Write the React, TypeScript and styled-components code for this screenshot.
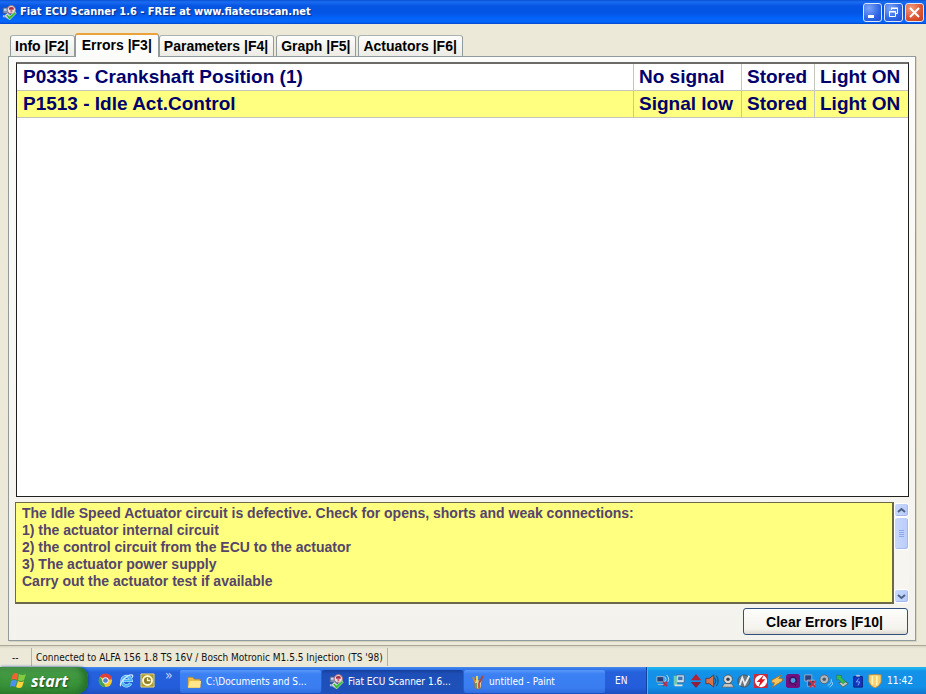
import React, { useState } from "react";
import styled, { createGlobalStyle, css } from "styled-components";

const GlobalStyle = createGlobalStyle`
  * { box-sizing: border-box; }
  html, body { margin: 0; height: 100%; }
  body { font-family: "Liberation Sans", Arial, sans-serif; overflow: hidden; }
  button, textarea { font: inherit; margin: 0; }
  svg { display: block; flex: none; }
`;

const uiFont = css`
  font-family: "DejaVu Sans Condensed", "DejaVu Sans", Tahoma, sans-serif;
`;

const Desktop = styled.div`
  display: flex;
  flex-direction: column;
  height: 100vh;
  background: #ece9d8;
`;

const TitleBar = styled.header`
  display: flex;
  align-items: center;
  gap: 3px;
  flex: none;
  height: 24px;
  padding: 0 2px;
  background: linear-gradient(#0b52d4 0, #1a6cf2 2px, #0655e2 6px, #0355e6 13px, #0465fb 19px, #0465fb 22px, #0148c8 24px);
`;

const Title = styled.h1`
  flex: 1;
  margin: 0;
  font: bold 11px/16px "DejaVu Sans Condensed", "DejaVu Sans", sans-serif;
  color: #fff;
  text-shadow: 1px 1px 1px #0c2f86;
  white-space: nowrap;
`;

const WindowButton = styled.button<{ $close?: boolean }>`
  display: flex;
  align-items: center;
  justify-content: center;
  width: 19px;
  height: 19px;
  padding: 0;
  border: 1px solid #dbe6fb;
  border-radius: 3px;
  background: ${(p) =>
    p.$close
      ? "radial-gradient(circle at 30% 25%, #f09a7c, #dd5230 60%, #c13f1c)"
      : "radial-gradient(circle at 30% 25%, #7ba4f8, #2f66e6 60%, #1d50cc)"};
`;

const WindowButtons = styled.div`
  display: flex;
  gap: 2px;
`;

const Main = styled.main`
  display: flex;
  flex-direction: column;
  flex: 1;
  min-height: 0;
  padding: 9px 10px 4px 8px;
`;

const TabList = styled.div`
  display: flex;
  align-items: flex-end;
  flex: none;
  height: 24px;
  margin-bottom: -1px;
  padding-left: 2px;
`;

const Tab = styled.button<{ $active: boolean }>`
  position: relative;
  height: ${(p) => (p.$active ? 24 : 22)}px;
  margin-right: ${(p) => (p.$active ? 0 : 2)}px;
  padding: 0 5px 0 4px;
  border: 1px solid #919b9c;
  border-top: ${(p) => (p.$active ? "2px solid #eba23b" : "1px solid #a9b3b4")};
  border-bottom: ${(p) => (p.$active ? "0" : "1px solid #919b9c")};
  border-radius: 3px 3px 0 0;
  background: ${(p) => (p.$active ? "#fcfcfb" : "linear-gradient(#fdfdfc, #ecebe5)")};
  font: bold 14px/20px "Liberation Sans", Arial, sans-serif;
  color: #000;
  white-space: nowrap;
  ${(p) => p.$active && "margin-left: -2px; padding: 0 6px 4px 6px; z-index: 1;"}
`;

const Panel = styled.section`
  display: flex;
  flex-direction: column;
  flex: 1;
  min-height: 0;
  padding: 5px 6px 5px 7px;
  border: 1px solid #919b9c;
  background: linear-gradient(#fcfcfb, #f3f2ec);
  box-shadow: 1px 1px 0 #d6d3c3;
`;

const ErrorList = styled.div`
  flex: 1;
  min-height: 0;
  overflow: hidden;
  border: 1px solid #202020;
  border-top: 2px solid #6d6b67;
  background: #fff;
`;

const ErrorTable = styled.table`
  width: 100%;
  border-collapse: separate;
  border-spacing: 0;
  font: bold 19px/26px "Liberation Sans", Arial, sans-serif;
  color: #00006c;
`;

const ErrorRow = styled.tr<{ $selected: boolean }>`
  background: ${(p) => (p.$selected ? "#ffff80" : "#fff")};
`;

const Cell = styled.td<{ $width?: number }>`
  width: ${(p) => (p.$width ? `${p.$width}px` : "auto")};
  height: 27px;
  padding: 0 0 0 6px;
  border-bottom: 1px solid #c6c5bb;
  white-space: nowrap;
  & + & { border-left: 1px solid #c6c5bb; padding-left: 5px; }
`;

const Details = styled.div`
  display: flex;
  flex: none;
  height: 102px;
  margin: 5px 0 4px -1px;
`;

const DetailsText = styled.textarea`
  flex: 1;
  min-width: 0;
  padding: 2px 6px 0;
  border: 1px solid #6b6948;
  border-right-width: 2px;
  border-bottom-width: 2px;
  border-radius: 0;
  outline: 0;
  resize: none;
  overflow: hidden;
  background: #ffff80;
  color: #55456a;
  font: bold 14px/17px "Liberation Sans", Arial, sans-serif;
`;

const ScrollBar = styled.div`
  display: flex;
  flex-direction: column;
  width: 15px;
  padding: 1px 0;
  background: #f6f5f0;
`;

const ScrollPart = styled.button<{ $height: number; $last?: boolean }>`
  display: flex;
  align-items: center;
  justify-content: center;
  width: 15px;
  height: ${(p) => p.$height}px;
  margin-top: ${(p) => (p.$last ? "auto" : "0")};
  padding: 0;
  border: 1px solid #fff;
  border-radius: 3px;
  background: linear-gradient(90deg, #c9d8fc, #b9ccfa);
  box-shadow: inset -1px -1px 0 #a3b9ef;
`;

const Actions = styled.div`
  display: flex;
  justify-content: flex-end;
  padding-right: 1px;
`;

const ClearButton = styled.button`
  width: 165px;
  height: 27px;
  padding: 0 2px 0 0;
  border: 1px solid #2f4f7c;
  border-radius: 3px;
  background: linear-gradient(#fdfdfb, #f3f2ed 80%, #dcd8ce);
  font: bold 14px/20px "Liberation Sans", Arial, sans-serif;
  color: #000;
`;

const StatusBar = styled.footer`
  display: flex;
  flex: none;
  height: 22px;
  padding-top: 2px;
  border-top: 1px solid #aaa799;
  background: linear-gradient(#d9d6c6, #ece9d8 3px);
  ${uiFont}
  font-size: 10px;
  line-height: 19px;
  color: #111;
`;

const StatusItem = styled.div<{ $narrow?: boolean }>`
  width: ${(p) => (p.$narrow ? "32px" : "auto")};
  padding: ${(p) => (p.$narrow ? "0 0 0 12px" : "0 4px")};
  height: 18px;
  border-right: 1px solid #b5b2a2;
  white-space: nowrap;
`;

const TaskBar = styled.nav`
  display: flex;
  flex: none;
  height: 27px;
  background: linear-gradient(#4b8bea 0, #3178ea 2px, #2661dc 5px, #245ddb 20px, #1e4fbd 27px);
  ${uiFont}
  font-size: 10px;
  color: #fff;
`;

const StartButton = styled.button`
  display: flex;
  align-items: center;
  gap: 4px;
  width: 88px;
  padding: 0 0 0 9px;
  border: 0;
  border-radius: 0 10px 12px 0;
  background: linear-gradient(#62a462 0, #469b46 3px, #3a943a 16px, #2f8330 27px);
  box-shadow: inset -5px 0 6px #267128, 1px 0 3px #17469f;
  font: italic bold 16px/24px "Open Sans", sans-serif;
  color: #fff;
  text-shadow: 1px 1px 2px #1b4a1c;
`;

const QuickLaunch = styled.div`
  display: flex;
  align-items: center;
  gap: 6px;
  width: 92px;
  padding-left: 10px;
`;

const IconButton = styled.button`
  padding: 0;
  border: 0;
  background: none;
`;

const Chevron = styled.span`
  align-self: flex-start;
  margin-left: 4px;
  font-size: 14px;
  line-height: 16px;
  color: #c5d8fa;
`;

const TaskButton = styled.button<{ $active?: boolean }>`
  display: flex;
  align-items: center;
  gap: 4px;
  width: 141px;
  height: 23px;
  margin: 3px 1px 0 0;
  padding: 0 7px;
  border: 0;
  border-radius: 2px;
  background: ${(p) =>
    p.$active
      ? "linear-gradient(#173f9c, #1e4fb8 4px, #1f51bb)"
      : "linear-gradient(#5b97f8, #3c81f3 4px, #397df0 18px, #2f6de0)"};
  color: #fff;
  white-space: nowrap;
`;

const Language = styled.div`
  flex: 1;
  padding-left: 9px;
  line-height: 28px;
`;

const Tray = styled.div`
  display: flex;
  align-items: center;
  justify-content: space-between;
  width: 280px;
  padding: 0 13px 0 9px;
  border-left: 1px solid #10429f;
  background: linear-gradient(#2aa6ee 0, #19b9f0 1px, #1492e8 4px, #1290e8 20px, #0e74cb 27px);
  box-shadow: inset 1px 0 0 #35bdf5;
`;

const Clock = styled.time`
  margin-left: 3px;
`;

function ScannerIcon({ size = 16 }: { size?: number }) {
  return (
    <svg width={size} height={size} viewBox="0 0 16 16">
      <path d="M1 3h6v6H1z" fill="#7d91b8" stroke="#3b5489" />
      <path d="M2 4h3v2H2zM1 11h4v2H1z" fill="#c8d9f5" />
      <circle cx="10" cy="5" r="4.4" fill="#e9dfe2" stroke="#a56a72" />
      <path d="M7.5 3q2.500-2 5 0v2h-5z" fill="#a53040" />
      <path d="M9 5h2v3H9z" fill="#d0667a" />
      <path d="M2 12l4-4 3 3-3 4z" fill="#c9c5ed" stroke="#6570ac" strokeWidth=".6" />
      <path d="M4 11l2-1 2 2 6-5 1 2-7 7z" fill="#35bc35" stroke="#dff5d0" strokeWidth=".7" />
    </svg>
  );
}

function WindowsLogo() {
  return (
    <svg width="18" height="17" viewBox="0 0 18 17">
      <path d="M4 2q3-2 5 0L8 8Q5 6 2 8z" fill="#f26332" />
      <path d="M10 2q3 2 7 0l-2 6q-3 2-6 0z" fill="#86c940" />
      <path d="M2 9q3-2 6 0l-2 6q-3-2-5 0z" fill="#4b91f2" />
      <path d="M9 9q3 2 6 0l-2 6q-3 2-6 0z" fill="#fdd33d" />
    </svg>
  );
}

function ChromeIcon() {
  return (
    <svg width="15" height="15" viewBox="0 0 16 16">
      <circle cx="8" cy="8" r="7" fill="#f2c831" />
      <path d="M2 4a7 7 0 0 1 13 3H8z" fill="#dd4236" />
      <path d="M2 4l4 6 2 5A7 7 0 0 1 2 4" fill="#43a353" />
      <circle cx="8" cy="8" r="3.4" fill="#e9f2ff" />
      <circle cx="8" cy="8" r="2.5" fill="#4b83d5" />
    </svg>
  );
}

function ExplorerIcon() {
  return (
    <svg width="15" height="15" viewBox="0 0 16 16" fill="none">
      <path d="M12.500 11A5 5 0 1 1 13 8H5" stroke="#c7ecff" strokeWidth="3.4" />
      <path d="M12.500 11A5 5 0 1 1 13 8H5" stroke="#48b4f4" strokeWidth="2.2" />
      <path d="M2 14C-1 12 8 2 13 2c2 0 2 1 1 3" stroke="#cceaff" strokeWidth="1.4" />
    </svg>
  );
}

function OutlookIcon() {
  return (
    <svg width="15" height="15" viewBox="0 0 16 16">
      <path d="M1 1h14v14H1z" fill="#ad9a31" stroke="#e9d878" />
      <circle cx="8" cy="8" r="4.8" fill="#8d7c25" stroke="#fff9cf" strokeWidth="2" />
      <path d="M8 5v3h3" fill="none" stroke="#fff9cf" strokeWidth="1.4" />
    </svg>
  );
}

function FolderIcon() {
  return (
    <svg width="15" height="14" viewBox="0 0 16 14">
      <path d="M1 2h5l2 2h6v9H1z" fill="#eebc45" stroke="#ae7d22" strokeWidth=".6" />
      <path d="M3 6h12l-1 7H1z" fill="#ffe58b" />
    </svg>
  );
}

function PaintIcon() {
  return (
    <svg width="14" height="16" viewBox="0 0 14 16">
      <path d="M3 6h8l-1 8q-3 2-6 0z" fill="#e0cfae" stroke="#765b42" strokeWidth=".7" />
      <path d="M4 8L2 3" stroke="#c88545" strokeWidth="2" />
      <path d="M6 8V2" stroke="#e7d65a" strokeWidth="2" />
      <path d="M8 9l4-7" stroke="#a84940" strokeWidth="2" />
      <path d="M5 9v5" stroke="#63a05c" strokeWidth="2" />
      <path d="M8 9v5" stroke="#cf5744" strokeWidth="2" />
    </svg>
  );
}

const trayDrawings: { name: string; art: React.ReactNode }[] = [
  { name: "Wireless disconnected", art: <><path d="M1 3h8v6H1zM2 12h7" fill="#293d79" stroke="#b3bfce" /><path d="M10 3q3 3 0 6m2-8q5 5 0 10" fill="none" stroke="#c4e2f0" /><path d="M8 9l5 5m0-5l-5 5" stroke="#b62b4c" strokeWidth="2" /></> },
  { name: "Updates", art: <><path d="M5 1h9v9H5z" fill="#d3e1f3" stroke="#386596" /><path d="M7 3h5v4H7z" fill="#3b73b8" /><path d="M2 2h4v11H2z" fill="#6fc9b4" /><path d="M3 12h9v2H3z" fill="#e0dfd4" /></> },
  { name: "Transfer", art: <><path d="M8 0l6 7H2z" fill="#b02436" /><path d="M8 16L2 9h12z" fill="#8f1f3d" /></> },
  { name: "Volume", art: <><path d="M1 5h4l5-4v14l-5-4H1z" fill="#d9734a" stroke="#5a3337" /><path d="M11 4q3 4 0 8m2-10q4 6 0 12" stroke="#243354" fill="none" /></> },
  { name: "Camera", art: <><circle cx="8" cy="6" r="5" fill="#d5d9dc" stroke="#4a4e55" /><circle cx="8" cy="6" r="2" fill="#35414e" /><path d="M4 11h8l3 4H1z" fill="#c8c9c5" stroke="#454950" strokeWidth=".7" /></> },
  { name: "Modem", art: <><circle cx="8" cy="8" r="7" fill="#6c7880" stroke="#3f5264" /><path d="M3 13L6 4l3 8 5-10" stroke="#e7eff4" strokeWidth="2" fill="none" /></> },
  { name: "Power", art: <><path d="M0 0h16v16H0z" fill="#ca2b3c" /><circle cx="8" cy="8" r="7" fill="#fff" /><path d="M11 1L3 9h4l-2 6 8-9H9z" fill="#e01824" /></> },
  { name: "Accelerator", art: <><path d="M13 1L2 7v3h3l-2 5 11-7V5h-4z" fill="#f4c45b" stroke="#a86e28" /></> },
  { name: "Messenger", art: <><path d="M2 0h12l2 2v12l-2 2H2l-2-2V2z" fill="#71117f" /><circle cx="8" cy="7.500" r="3.800" fill="#4b9be7" stroke="#451062" strokeWidth="2" /><path d="M9 11h3v4" stroke="#71117f" strokeWidth="2" /></> },
  { name: "Network disconnected", art: <><path d="M2 1h8v7H2zM5 7h8v7H5z" fill="#2a4380" stroke="#a5adc5" /><path d="M8 8l6 7m0-7l-6 7" stroke="#d92b40" strokeWidth="2" /></> },
  { name: "Audio", art: <><circle cx="6" cy="6" r="5" fill="#aeb8bd" stroke="#56616d" /><circle cx="6" cy="6" r="2" fill="#4d5965" /><path d="M10 13q5-2 4-7m-2 9q4-2 4-6" fill="none" stroke="#a7dbf4" /></> },
  { name: "Remove hardware", art: <><path d="M4 10l7-2 4 3-6 4z" fill="#b9c7c2" stroke="#43634b" /><path d="M2 1l6 1-1 2 5 5-3 2-5-5-2 1z" fill="#38bd51" stroke="#276e43" strokeWidth=".6" /></> },
  { name: "Battery", art: <><path d="M3 3h10v12H3z" fill="#1634c5" stroke="#0a1d75" /><path d="M6 1h4v2H6z" fill="#b9c6dc" /><path d="M9 5L6 9h4l-2 4" fill="none" stroke="#78b9ff" /></> },
  { name: "Security", art: <><path d="M1 1q7-1 14 0v8q-2 5-7 7-5-2-7-7z" fill="#f5cf72" stroke="#b98e3b" /><path d="M5 2v10m5-10v11" stroke="#fff2b2" strokeWidth="2" /></> },
];

const errors = [
  ["P0335 - Crankshaft Position (1)", "No signal", "Stored", "Light ON"],
  ["P1513 - Idle Act.Control", "Signal low", "Stored", "Light ON"],
];
const columnWidths = [0, 108, 73, 94];
const tabs = ["Info |F2|", "Errors |F3|", "Parameters |F4|", "Graph |F5|", "Actuators |F6|"];
const description = `The Idle Speed Actuator circuit is defective. Check for opens, shorts and weak connections:
1) the actuator internal circuit
2) the control circuit from the ECU to the actuator
3) The actuator power supply
Carry out the actuator test if available`;

export default function App() {
  const [activeTab, setActiveTab] = useState(1);
  const [selected, setSelected] = useState(1);
  return (
    <Desktop>
      <GlobalStyle />
      <TitleBar>
        <ScannerIcon size={15} />
        <Title>Fiat ECU Scanner 1.6 - FREE at www.fiatecuscan.net</Title>
        <WindowButtons>
          <WindowButton aria-label="Minimize"><svg width="13" height="13"><path d="M2 9h6v3H2z" fill="#fff" /></svg></WindowButton>
          <WindowButton aria-label="Restore"><svg width="13" height="13" fill="none" stroke="#fff"><path d="M4.500 4V2.500h6v5H9M4 2h7" /><path d="M2.500 5.500h6v5h-6zM2 6h7" /></svg></WindowButton>
          <WindowButton $close aria-label="Close"><svg width="13" height="13"><path d="M2 2l9 9m0-9l-9 9" stroke="#fff" strokeWidth="2" /></svg></WindowButton>
        </WindowButtons>
      </TitleBar>
      <Main>
        <TabList role="tablist">
          {tabs.map((label, i) => (
            <Tab key={label} role="tab" aria-selected={i === activeTab} $active={i === activeTab} onClick={() => setActiveTab(i)}>{label}</Tab>
          ))}
        </TabList>
        <Panel role="tabpanel">
          <ErrorList>
            <ErrorTable>
              <tbody>
                {errors.map((row, r) => (
                  <ErrorRow key={row[0]} $selected={r === selected} onClick={() => setSelected(r)}>
                    {row.map((text, c) => <Cell key={c} $width={columnWidths[c]}>{text}</Cell>)}
                  </ErrorRow>
                ))}
              </tbody>
            </ErrorTable>
          </ErrorList>
          <Details>
            <DetailsText readOnly aria-label="Error description" value={description} />
            <ScrollBar>
              <ScrollPart $height={14} aria-label="Scroll up"><svg width="9" height="7"><path d="M1 5l3.500-3L8 5" fill="none" stroke="#4d6185" strokeWidth="2" /></svg></ScrollPart>
              <ScrollPart $height={33} aria-label="Scroll position"><svg width="7" height="8"><path d="M1 .5h5M1 2.500h5M1 4.500h5M1 6.500h5" stroke="#8ca8ed" /></svg></ScrollPart>
              <ScrollPart $height={14} $last aria-label="Scroll down"><svg width="9" height="7"><path d="M1 2l3.500 3L8 2" fill="none" stroke="#4d6185" strokeWidth="2" /></svg></ScrollPart>
            </ScrollBar>
          </Details>
          <Actions><ClearButton>Clear Errors |F10|</ClearButton></Actions>
        </Panel>
      </Main>
      <StatusBar>
        <StatusItem $narrow>--</StatusItem>
        <StatusItem>Connected to ALFA 156 1.8 TS 16V / Bosch Motronic M1.5.5 Injection (TS '98)</StatusItem>
      </StatusBar>
      <TaskBar>
        <StartButton><WindowsLogo />start</StartButton>
        <QuickLaunch>
          <IconButton aria-label="Chrome"><ChromeIcon /></IconButton>
          <IconButton aria-label="Internet Explorer"><ExplorerIcon /></IconButton>
          <IconButton aria-label="Outlook"><OutlookIcon /></IconButton>
          <Chevron>»</Chevron>
        </QuickLaunch>
        <TaskButton><FolderIcon />C:\Documents and S...</TaskButton>
        <TaskButton $active><ScannerIcon size={15} />Fiat ECU Scanner 1.6...</TaskButton>
        <TaskButton><PaintIcon />untitled - Paint</TaskButton>
        <Language>EN</Language>
        <Tray>
          {trayDrawings.map(({ name, art }) => (
            <svg key={name} role="img" aria-label={name} width="14" height="14" viewBox="0 0 16 16">{art}</svg>
          ))}
          <Clock>11:42</Clock>
        </Tray>
      </TaskBar>
    </Desktop>
  );
}
